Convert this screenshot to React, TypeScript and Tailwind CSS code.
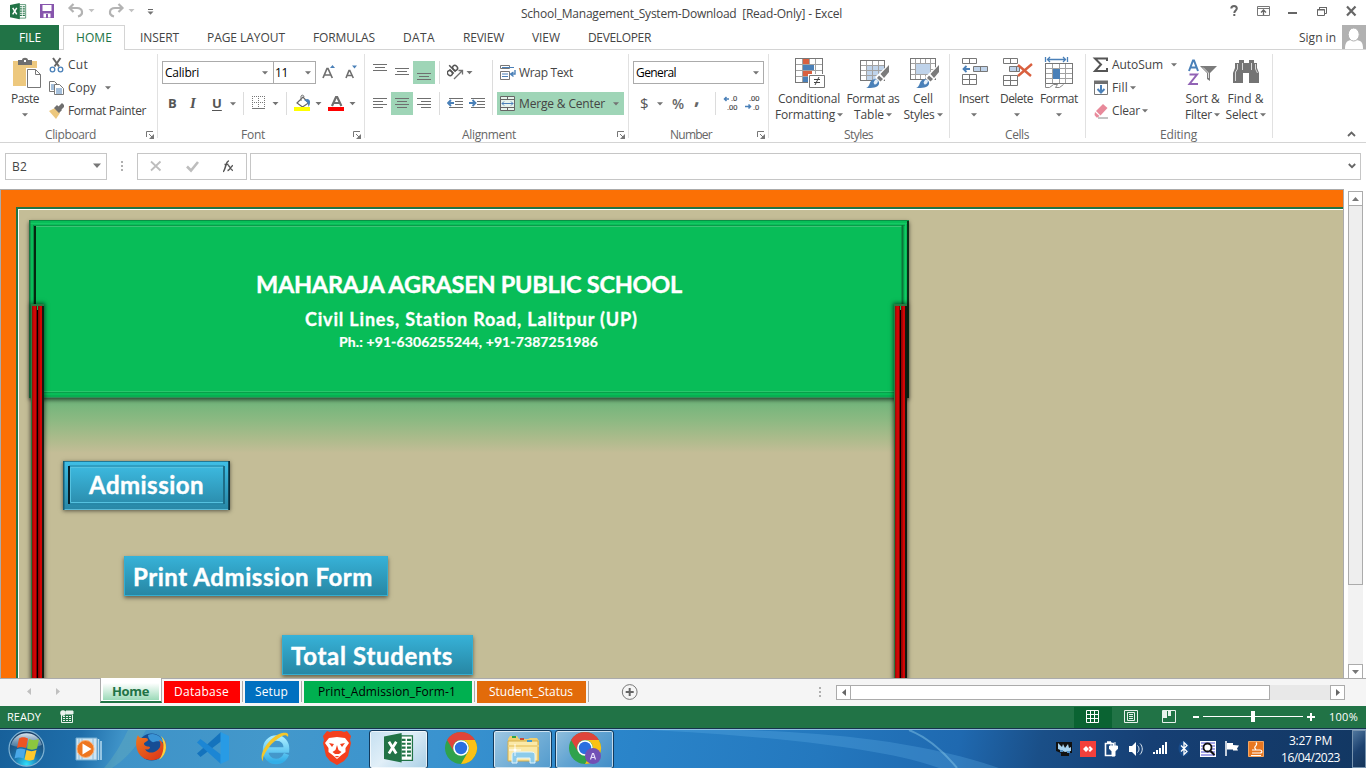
import { useLayoutEffect, useRef } from "react";
import type { ReactNode } from "react";

const GRAY = "#6f6f6f";
const BLUE = "#4a80b8";

/* Text set to the width given by its class, by letter spacing. */
function Fit({ className = "", children }: { className?: string; children: string }) {
  const outer = useRef<HTMLSpanElement>(null);
  const inner = useRef<HTMLSpanElement>(null);
  useLayoutEffect(() => {
    if (!outer.current || !inner.current) return;
    inner.current.style.letterSpacing = "0px";
    const room = outer.current.getBoundingClientRect().width;
    const own = inner.current.getBoundingClientRect().width;
    inner.current.style.letterSpacing = `${(room - own) / children.length}px`;
  }, [children]);
  return (
    <span ref={outer} className={`inline-block shrink-0 whitespace-pre ${className}`}>
      <span ref={inner} className="inline-block">{children}</span>
    </span>
  );
}

/* Icon whose drawing uses window coordinates: b = [x, y, width, height]. */
function Ico({ b, className = "", children }: { b: [number, number, number, number]; className?: string; children: ReactNode }) {
  return (
    <svg width={b[2]} height={b[3]} viewBox={b.join(" ")} className={`block shrink-0 ${className}`} fill="none">
      {children}
    </svg>
  );
}

const Arr = ({ x, y, c = "#737373" }: { x: number; y: number; c?: string }) => <path d={`M${x - 3} ${y - 1.5}h6l-3 3.2z`} fill={c} />;

function Drop({ className = "" }: { className?: string }) {
  return (
    <svg width="6" height="4" viewBox="0 0 6 4" className={`block shrink-0 ${className}`}>
      <path d="M0 .3h6L3 3.5z" fill="#737373" />
    </svg>
  );
}

function Group({ className, labelClass, label, launcher, children }: { className: string; labelClass: string; label: string; launcher?: boolean; children: ReactNode }) {
  return (
    <>
      <div className={`flex h-[92px] shrink-0 flex-col ${className}`}>
        <div className="h-[75px]">{children}</div>
        <div className="flex h-[17px] items-center text-[#666666]">
          <Fit className={`mt-[2px] ${labelClass}`}>{label}</Fit>
          {launcher && (
            <svg width="9" height="8" viewBox="0 0 9 8" className="mr-[2px] ml-auto mt-[2px]" fill="none" stroke="#777">
              <path d="M.5 6V.5H7M3 3l3.5 3.5" />
              <path d="M8 3v5H3z" fill="#777" stroke="none" />
            </svg>
          )}
        </div>
      </div>
      <div className="mt-1 h-[84px] w-px shrink-0 bg-[#e1e1e1]" />
    </>
  );
}

function Sep({ className }: { className: string }) {
  return <div className={`w-px shrink-0 bg-[#dcdcdc] ${className}`} />;
}

function Lines({ x, rows }: { x: number; rows: [number, number, number][] }) {
  return (
    <>
      {rows.map(([dx, y, w]) => (
        <rect key={y} x={x + dx} y={y} width={w} height="1" fill={GRAY} />
      ))}
    </>
  );
}

function Table({ x, y, w, h, nx, ny }: { x: number; y: number; w: number; h: number; nx: number; ny: number }) {
  const v = Array.from({ length: nx - 1 }, (_, i) => `M${x + Math.round(((i + 1) * w) / nx)} ${y}v${h}`).join("");
  const hz = Array.from({ length: ny - 1 }, (_, i) => `M${x} ${y + Math.round(((i + 1) * h) / ny)}h${w}`).join("");
  return (
    <>
      <path d={v + hz} stroke="#a2a2a2" />
      <rect x={x} y={y} width={w} height={h} stroke="#777" />
    </>
  );
}

function Brush({ x, y }: { x: number; y: number }) {
  return (
    <g transform={`translate(${x} ${y})`}>
      <path d="M22 0 9 12l6 7L23 9z" fill="#fff" />
      <path d="M23 0 14.500 9l3.500 4 5-6z" fill="#7b7b7b" />
      <path d="m13 10.500-2 2.500 3.500 3.500 2.500-2.500z" fill="#7b7b7b" />
      <path d="M0 23c4-1 3-6 6-8 4-2 8 1 7 4-1 4-7 4-13 4z" fill={BLUE} />
      <ellipse cx="9.800" cy="17" rx="1.800" ry="2.600" transform="rotate(35 9.800 17)" fill="#e6eff8" />
    </g>
  );
}

function Chrome({ x, y }: { x: number; y: number }) {
  return (
    <g transform={`translate(${x} ${y})`}>
      <circle r="16" fill="#2fa24c" />
      <path d="M-13.860-8A16 16 0 0 1 13.860-8L0-8A8 8 0 0 0-6.930 4z" fill="#e0443a" />
      <path d="M13.860-8A16 16 0 0 1 0 16L6.930 4A8 8 0 0 0 0-8z" fill="#fbc116" />
      <circle r="7.800" fill="#fff" />
      <circle r="6.200" fill="#2a6fe0" />
    </g>
  );
}

function ExcelMark({ x, y, s }: { x: number; y: number; s: number }) {
  return (
    <g transform={`translate(${x} ${y}) scale(${s})`}>
      <path d="M17 3h12v25H17z" fill="#fff" stroke="#217346" strokeWidth="1.300" />
      <path d="M18 7h4M18 11h4M18 15h4M18 19h4M18 23h4M23.500 7h4M23.500 11h4M23.500 15h4M23.500 19h4M23.500 23h4" stroke="#217346" strokeWidth="2.200" />
      <path d="M0 3.500 18 0v30L0 26.500z" fill="#217346" />
      <path d="m5 9 7.500 12M12.500 9 5 21" stroke="#fff" strokeWidth="2.800" />
    </g>
  );
}

function TitleBar() {
  return (
    <div className="flex h-[25px] shrink-0 items-center bg-white">
      <Ico b={[0, 0, 170, 25]}>
        <ExcelMark x={10} y={3} s={0.54} />
        <path d="M40 4h14v14H40z" fill="#8755ad" />
        <path d="M42.500 5h9v6h-9zM43.500 13.500h7v4h-7z" fill="#fff" />
        <path d="M46 14h2v4h-2z" fill="#8755ad" />
        <path d="m73.500 4-4 4 4 4M70 8h7c6 0 7 7 1 8.500" stroke="#b3b3b3" strokeWidth="2.200" />
        <Arr x={91.500} y={10.500} c="#c2c2c2" />
        <path d="m118.500 4 4 4-4 4M122 8h-7c-6 0-7 7-1 8.500" stroke="#b3b3b3" strokeWidth="2.200" />
        <Arr x={131.500} y={10.500} c="#c2c2c2" />
        <path d="M148 9.500h5" stroke="#666" />
        <Arr x={150.500} y={13} />
      </Ico>
      <Fit className="ml-[351px] mt-[2px] w-[321px]">School_Management_System-Download  [Read-Only] - Excel</Fit>
      <Ico b={[1220, 0, 146, 25]} className="ml-auto">
        <path d="M1231.300 8.500c0-3.500 5.500-3.500 5.500 0 0 2-2.500 2-2.500 4.500M1233.300 15h2" stroke="#666" strokeWidth="2" />
        <path d="M1257.500 6.500h12v9h-12zM1257.500 8.500h12" stroke="#777" />
        <path d="M1263.500 15v-4M1261 12.500l2.500-2.500 2.500 2.500" stroke="#666" strokeWidth="1.300" />
        <path d="M1288 13h9" stroke="#666" strokeWidth="2" />
        <path d="M1317.500 9.500h7v6h-7zM1317 10h8M1319.500 9V7.500h7v6H1325M1319 7.500h8" stroke="#666" />
        <path d="m1347 6.500 8.500 9M1355.500 6.500l-8.500 9" stroke="#666" strokeWidth="2.200" />
      </Ico>
    </div>
  );
}

function RibbonTabs() {
  return (
    <div className="flex h-[25px] shrink-0 border-b border-[#d4d4d4] bg-white leading-[26px]">
      <div className="h-[25px] w-[59px] bg-[#217346] pl-[19px] text-white">
        <Fit className="w-[22px]">FILE</Fit>
      </div>
      <div className="ml-1 h-[25px] w-[62px] border border-b-0 border-[#d4d4d4] bg-white pl-3 leading-[24px] text-[#217346]">
        <Fit className="w-[36px]">HOME</Fit>
      </div>
      <Fit className="ml-[15px] w-[39px]">INSERT</Fit>
      <Fit className="ml-[28px] w-[78px]">PAGE LAYOUT</Fit>
      <Fit className="ml-[28px] w-[62px]">FORMULAS</Fit>
      <Fit className="ml-[28px] w-[32px]">DATA</Fit>
      <Fit className="ml-[28px] w-[41px]">REVIEW</Fit>
      <Fit className="ml-[28px] w-[28px]">VIEW</Fit>
      <Fit className="ml-[28px] w-[63px]">DEVELOPER</Fit>
      <Fit className="ml-auto mr-[6px] w-[37px] leading-[25px]">Sign in</Fit>
      <Ico b={[1342, 25, 24, 24]}>
        <path d="M1342 25h24v24h-24z" fill="#b1b1b1" />
        <path d="M1345 49c0-7 2.500-8.500 6-9h5c5 .500 7 2 7 9z" fill="#fff" />
        <ellipse cx="1353.700" cy="34.500" rx="5.500" ry="6.500" fill="#fff" stroke="#b1b1b1" />
      </Ico>
    </div>
  );
}

function Clipboard() {
  return (
    <Group className="w-[157px]" labelClass="ml-[45px] w-[51px]" label="Clipboard" launcher>
      <div className="flex">
        <div className="flex w-[49px] flex-col items-center pt-[7px]">
          <Ico b={[12, 57, 30, 32]} className="ml-[5px]">
            <path d="M13 61h24v25H13z" fill="#edc87e" />
            <path d="M18 60h4c0-3 6-3 6 0h4v5H18z" fill="#6f6f6f" />
            <path d="M24 60h2v2h-2z" fill="#fff" />
            <path d="M26 68h11l5 5v16H26z" fill="#fff" />
            <path d="M27.500 69.500h8l5 5v13h-13z" fill="#fff" stroke="#777" />
            <path d="M35.500 69.500v5h5" stroke="#777" />
          </Ico>
          <Fit className="mt-[2px] ml-px w-[28px] leading-4">Paste</Fit>
          <Drop className="mt-[6px]" />
        </div>
        <div className="flex flex-col pt-[3px]">
          <div className="flex h-[23px] items-center gap-1">
            <Ico b={[49, 56, 15, 16]}>
              <path d="m53 57 6 8.500M60.500 57l-6 8.500" stroke="#666" strokeWidth="2" />
              <circle cx="52.500" cy="68.500" r="2.300" stroke={BLUE} strokeWidth="1.300" />
              <circle cx="60.500" cy="68.500" r="2.300" stroke={BLUE} strokeWidth="1.300" />
            </Ico>
            <Fit className="w-[20px]">Cut</Fit>
          </div>
          <div className="flex h-[23px] items-center gap-1">
            <Ico b={[49, 79, 15, 16]}>
              <path d="M49.500 80.500h5l3 3v7h-8z" fill="#fff" stroke="#777" />
              <path d="M51 84h3M51 86h3M51 88h3" stroke={BLUE} />
              <path d="M54.500 83.500h5l4 4v6h-9z" fill="#fff" stroke="#777" />
              <path d="M56 88h6M56 90h6M56 92h6" stroke={BLUE} />
            </Ico>
            <Fit className="w-[28px]">Copy</Fit>
            <Drop className="ml-[5px]" />
          </div>
          <div className="flex h-[23px] items-center gap-1">
            <Ico b={[49, 102, 15, 16]}>
              <path d="m49 110 6-3 5 5-4 6z" fill="#edc87e" />
              <path d="m54 107 3-3 5 5-3 3zM58 106l4-4 3 3-4 4z" fill="#6f6f6f" />
            </Ico>
            <Fit className="w-[78px]">Format Painter</Fit>
          </div>
        </div>
      </div>
    </Group>
  );
}

function FontGroup() {
  return (
    <Group className="w-[206px]" labelClass="ml-[83px] w-[24px]" label="Font" launcher>
      <div className="flex h-[34px] pt-[11px] pl-1">
        <div className="flex h-[23px] w-[111px] items-center justify-between border border-r-0 border-[#ababab] pr-[5px] pl-[2px] text-black">
          <Fit className="mt-px w-[34px]">Calibri</Fit>
          <Drop />
        </div>
        <div className="flex h-[23px] w-[43px] items-center justify-between border border-[#ababab] pr-[4px] pl-px text-black">
          <Fit className="mt-px w-[13px]">11</Fit>
          <Drop />
        </div>
        <Ico b={[322, 61, 42, 23]} className="ml-[6px]">
          <path d="m323 78 4-9.500h1l4.300 9.500M324.500 75h6" stroke={GRAY} strokeWidth="1.700" />
          <path d="M330 68h5l-2.500-3z" fill={BLUE} />
          <path d="m346 78 3-7.500h.800l3.500 7.500M347.200 75.500h5" stroke={GRAY} strokeWidth="1.600" />
          <path d="M352 65.500h5l-2.500 3z" fill={BLUE} />
        </Ico>
      </div>
      <div className="mt-2 flex h-[23px] items-center text-[13px] text-[#555]">
        <span className="-mt-[2px] ml-[10px] w-[22px] font-bold">B</span>
        <span className="-mt-[2px] w-[22px] font-['Liberation_Serif'] text-[15px] font-bold italic">I</span>
        <span className="-mt-[2px] w-[18px] font-bold underline underline-offset-2">U</span>
        <Drop />
        <Sep className="ml-[7px] h-[23px]" />
        <Ico b={[252, 92, 30, 23]} className="ml-[7px]">
          <path d="M253 96.500h13M253 102.500h13M253.500 96v12M259.500 96v12M265.500 96v12" stroke="#777" strokeDasharray="1 1" />
          <path d="M253 108.500h13" stroke="#777" />
          <Arr x={276.500} y={103.500} />
        </Ico>
        <Sep className="ml-[5px] h-[23px]" />
        <Ico b={[295, 92, 69, 23]} className="ml-[7px]">
          <path d="m298 103 6-6 5.500 6-6 4z" stroke="#666" fill="#fff" strokeWidth="1.200" />
          <path d="M302 101v-5c1-1.500 3-1 3 1" stroke="#777" />
          <path d="m305 100 3-1c3.500 0 4 4 1.500 8-.300-4-1-5-4.500-7z" fill={BLUE} />
          <path d="M295 107h16v4h-16z" fill="#ffff00" />
          <Arr x={319.500} y={103.500} />
          <path d="m333 106 4-9h1.200l4.200 9M334.500 103h6.500" stroke={GRAY} strokeWidth="2.200" />
          <path d="M329 107h16v4h-16z" fill="#ff0000" />
          <Arr x={353.500} y={103.500} />
        </Ico>
      </div>
    </Group>
  );
}

function Alignment() {
  return (
    <Group className="w-[263px]" labelClass="ml-[97px] w-[54px]" label="Alignment" launcher>
      <div className="flex pt-[10px]">
        <div>
          <div className="flex h-[24px] items-end">
            <Ico b={[369, 61, 22, 23]} className="ml-1">
              <Lines x={373} rows={[[0, 64, 14], [2, 67, 10], [0, 70, 14]]} />
            </Ico>
            <Ico b={[391, 61, 22, 23]}>
              <Lines x={395} rows={[[0, 68, 14], [2, 71, 10], [0, 74, 14]]} />
            </Ico>
            <Ico b={[413, 61, 22, 23]} className="bg-[#9fd5b7]">
              <Lines x={417} rows={[[0, 73, 14], [2, 76, 10], [0, 79, 14]]} />
            </Ico>
            <Sep className="ml-1 h-[23px]" />
            <Ico b={[447, 61, 32, 23]} className="ml-[7px]">
              <g transform="rotate(-45 452 71)" stroke="#555" strokeWidth="1.500">
                <ellipse cx="449" cy="71" rx="2.200" ry="2.700" />
                <path d="M451.500 68v6M454 65v9" />
                <ellipse cx="456.400" cy="71" rx="2.200" ry="2.700" />
              </g>
              <path d="m454 79 8-8M458.500 70.500h4v4" stroke={GRAY} strokeWidth="1.300" />
              <Arr x={469.500} y={72.500} />
            </Ico>
          </div>
          <div className="mt-2 flex h-[23px] items-end">
            <Ico b={[369, 92, 22, 23]} className="ml-1">
              <Lines x={373} rows={[[0, 98, 14], [0, 101, 10], [0, 104, 14], [0, 107, 10]]} />
            </Ico>
            <Ico b={[391, 92, 22, 23]} className="bg-[#9fd5b7]">
              <Lines x={395} rows={[[0, 98, 14], [2, 101, 10], [0, 104, 14], [2, 107, 10]]} />
            </Ico>
            <Ico b={[413, 92, 22, 23]}>
              <Lines x={417} rows={[[0, 98, 14], [4, 101, 10], [0, 104, 14], [4, 107, 10]]} />
            </Ico>
            <Sep className="ml-1 h-[23px]" />
            <Ico b={[447, 92, 40, 23]} className="ml-[7px]">
              <Lines x={447} rows={[[2, 98, 14], [8, 101, 8], [8, 104, 8], [2, 107, 14]]} />
              <path d="M449 103h5M451 100l-3 3 3 3" stroke={BLUE} strokeWidth="1.800" />
              <Lines x={469} rows={[[2, 98, 14], [8, 101, 8], [8, 104, 8], [2, 107, 14]]} />
              <path d="M469 103h5M472.500 100l3 3-3 3" stroke={BLUE} strokeWidth="1.800" />
            </Ico>
          </div>
        </div>
        <Sep className="ml-[5px] h-[55px]" />
        <div className="ml-1 pt-px">
          <div className="flex h-[23px] items-center pl-[3px]">
            <Ico b={[500, 64, 16, 16]}>
              <path d="M500.500 64.500h9v3h-9zM500.500 70.500h9v8h-9z" stroke="#777" />
              <path d="M502 66.500h12M502 73h6M502 75.500h6" stroke={BLUE} strokeWidth="1.200" />
              <path d="M515 69v4h-4M513.500 71l-3 2 3 2.500" stroke={BLUE} strokeWidth="1.400" />
            </Ico>
            <Fit className="mt-px ml-[3px] w-[54px]">Wrap Text</Fit>
          </div>
          <div className="mt-2 flex h-[23px] w-[127px] items-center bg-[#9fd5b7] pl-[3px]">
            <Ico b={[500, 95, 16, 16]}>
              <path d="M500.500 95.500h14v14h-14zM500.500 98.500h14M500.500 106.500h14M507.500 95v3M507.500 107v3" stroke="#666" fill="#e7f4ed" />
              <path d="M502 102.500h11M504 100.500l-2 2 2 2M511 100.500l2 2-2 2" stroke={BLUE} />
            </Ico>
            <Fit className="mt-px ml-[3px] w-[86px]">Merge &amp; Center</Fit>
            <Drop className="ml-[8px]" />
          </div>
        </div>
      </div>
    </Group>
  );
}

function NumberGroup() {
  return (
    <Group className="w-[139px]" labelClass="ml-[41px] w-[42px]" label="Number" launcher>
      <div className="flex h-[34px] pt-[11px] pl-1">
        <div className="flex h-[23px] w-[131px] items-center justify-between border border-[#ababab] pr-[4px] pl-[2px] text-black">
          <Fit className="mt-px w-[40px]">General</Fit>
          <Drop />
        </div>
      </div>
      <div className="mt-2 flex h-[23px] items-center">
        <span className="-mt-px ml-[11px] w-[17px] text-[15px] leading-[23px] text-[#555]">$</span>
        <Drop className="mt-px" />
        <span className="ml-[9px] w-[22px] text-[14px] font-semibold text-[#666]">%</span>
        <span className="-mt-[14px] w-[21px] text-[20px] font-bold leading-[23px] text-[#666]">,</span>
        <Sep className="h-[23px]" />
        <Ico b={[721, 92, 42, 23]} className="ml-[5px]">
          <g fill="#444" fontSize="7.500" fontFamily="Liberation Sans" stroke="#444" strokeWidth=".15">
            <text x="731" y="101">.0</text>
            <text x="727" y="109.700">.00</text>
            <text x="749" y="101">.00</text>
            <text x="753" y="109.700">.0</text>
          </g>
          <path d="M724 99h5M726.500 97l-2 2 2 2M745 106.500h5M748.500 104.500l2 2-2 2" stroke={BLUE} strokeWidth="1.500" />
        </Ico>
      </div>
    </Group>
  );
}

function Big({ className, icon, a, aw, b, bw }: { className: string; icon: ReactNode; a: string; aw: string; b?: string; bw?: string }) {
  return (
    <div className={`flex shrink-0 flex-col items-center pt-[6px] leading-4 ${className}`}>
      {icon}
      <Fit className={`mt-[3px] ${aw}`}>{a}</Fit>
      <div className="flex h-4 items-center gap-[2px]">
        {b && <Fit className={bw}>{b}</Fit>}
        <Drop className="-mt-px" />
      </div>
    </div>
  );
}

function Styles() {
  return (
    <Group className="w-[180px]" labelClass="ml-[75px] w-[29px]" label="Styles">
      <div className="flex">
        <Big className="ml-1 w-[72px]" a="Conditional" aw="w-[62px]" b="Formatting" bw="w-[60px]" icon={
          <Ico b={[793, 56, 32, 32]}>
            <Table x={795.500} y={58.500} w={27} h={24} nx={4} ny={4} />
            <path d="M803 59h6v5h-6zM803 71h9v5h-9z" fill="#d9603f" />
            <path d="M803 65h11v5h-11zM803 77h5v5h-5z" fill={BLUE} />
            <path d="M808 74h18v15h-18z" fill="#fff" />
            <path d="M809.500 75.500h15v12h-15z" fill="#fff" stroke="#777" />
            <path d="M814 79.500h6M814 82.500h6M819 77l-4 8" stroke="#444" />
          </Ico>
        } />
        <Big className="w-[56px]" a="Format as" aw="w-[53px]" b="Table" bw="w-[30px]" icon={
          <Ico b={[857, 56, 32, 32]}>
            <path d="M867 66h17v14h-17z" fill="#bfd3ea" />
            <Table x={860.500} y={60.500} w={24} h={20} nx={4} ny={4} />
            <Brush x={866} y={65} />
          </Ico>
        } />
        <Big className="w-[44px]" a="Cell" aw="w-[20px]" b="Styles" bw="w-[31px]" icon={
          <Ico b={[907, 56, 32, 32]}>
            <Table x={910.500} y={58.500} w={25} h={21} nx={5} ny={4} />
            <path d="M916 64h14v10h-14z" fill="#bfd3ea" />
            <Brush x={916} y={65} />
          </Ico>
        } />
      </div>
    </Group>
  );
}

function Cells() {
  return (
    <Group className="w-[135px]" labelClass="ml-[55px] w-[24px]" label="Cells">
      <div className="flex">
        <Big className="ml-[4px] w-[40px]" a="Insert" aw="w-[30px]" icon={
          <Ico b={[959, 56, 30, 32]}>
            <path d="M962.500 58.500h14v5h-14zM969.500 58v6M962.500 74.500h14v10h-14zM969.500 74v11M962 79.500h15" stroke="#777" />
            <path d="M973.500 66.500h14v5h-14zM980.500 66v6" fill="#bfd3ea" stroke="#777" />
            <path d="M964 69h6M966.500 66l-3 3 3 3" stroke={BLUE} strokeWidth="1.800" />
          </Ico>
        } />
        <Big className="w-[45px]" a="Delete" aw="w-[33px]" icon={
          <Ico b={[1001, 56, 32, 32]}>
            <path d="M1003.500 58.500h14v5h-14zM1010.500 58v6M1003.500 75.500h14v10h-14zM1010.500 75v11M1003 80.500h15" stroke="#777" />
            <path d="M1009.500 66.500h10v5h-10zM1016.500 66v6" fill="#bfd3ea" stroke="#777" />
            <path d="m1018 65 13 11M1032 64l-14 12" stroke="#d9603f" strokeWidth="2.400" />
          </Ico>
        } />
        <Big className="w-[40px]" a="Format" aw="w-[38px]" icon={
          <Ico b={[1043, 56, 32, 32]}>
            <path d="M1045.500 57v5M1067.500 57v5M1047 59.500h19M1050 57l-2.500 2.500 2.500 2.500M1063 57l2.500 2.500-2.500 2.500" stroke={BLUE} strokeWidth="1.300" />
            <Table x={1045.500} y={63.500} w={27} h={20} nx={4} ny={4} />
            <path d="M1053 69h7v10h-7z" fill={BLUE} />
            <path d="M1045.500 83v4.500h4l4-3h4l-2 3h4l4-3" stroke="#888" />
          </Ico>
        } />
      </div>
    </Group>
  );
}

function Editing() {
  return (
    <Group className="w-[186px]" labelClass="ml-[74px] w-[37px]" label="Editing">
      <div className="flex">
        <div className="w-[95px] pt-[3px] pl-[6px]">
          <div className="flex h-[23px] items-center">
            <Ico b={[1092, 56, 17, 16]}>
              <path d="M1107 60v-2.500h-12l6 6-6 6.500h12V67" stroke="#555" strokeWidth="2" />
            </Ico>
            <Fit className="ml-[3px] w-[51px]">AutoSum</Fit>
            <Drop className="ml-[8px]" />
          </div>
          <div className="flex h-[23px] items-center">
            <Ico b={[1092, 79, 17, 16]}>
              <path d="M1094.500 80.500h13v13h-13z" stroke="#777" />
              <path d="M1094 79.500h14v3.500h-14z" fill="#6f6f6f" />
              <path d="M1101 84v7M1097.500 88l3.500 3.500 3.500-3.500" stroke={BLUE} strokeWidth="2" />
            </Ico>
            <Fit className="ml-[3px] w-[16px]">Fill</Fit>
            <Drop className="ml-[2px]" />
          </div>
          <div className="flex h-[23px] items-center">
            <Ico b={[1092, 102, 17, 16]}>
              <path d="m1096 110 7-7 4.500 4-7 7.500z" fill="#e8899a" />
              <path d="m1095 111 4.500 4-2 1.500h-1l-2-2.500z" fill="#e8899a" />
              <path d="M1098 117h10" stroke="#888" />
            </Ico>
            <Fit className="ml-[3px] w-[28px]">Clear</Fit>
            <Drop className="ml-[2px]" />
          </div>
        </div>
        <Big className="w-[43px]" a="Sort &" aw="w-[34px]" b="Filter" bw="w-[27px]" icon={
          <Ico b={[1187, 56, 32, 32]} className="ml-[1px]">
            <path d="m1189 71 4-10.500h1l4 10.500M1190.500 67.500h6.500" stroke={BLUE} strokeWidth="2" />
            <path d="M1189.500 74.500h7.500l-7.500 9.500h8.500" stroke="#9163b5" strokeWidth="2" />
            <path d="M1200 66h17l-7 7v8l-3-2v-6z" fill="#7b7b7b" />
            <path d="M1203 67.500 1208.500 73v5" stroke="#ddd" />
          </Ico>
        } />
        <Big className="w-[43px]" a="Find &" aw="w-[36px]" b="Select" bw="w-[32px]" icon={
          <Ico b={[1230, 56, 32, 32]}>
            <path d="M1239 60h5v3h2v5h-11v-5h4zM1249 60h5v3h3v5h-11v-5h3zM1235 68h22l2 5v10h-10v-10h-6v10h-10V73z" fill="#747474" />
            <path d="M1237.500 64v5l-2 3v9M1242.500 63v7M1251.500 63v7M1255.500 64v5l2 4" stroke="#d8d8d8" />
          </Ico>
        } />
      </div>
    </Group>
  );
}

function FormulaBar() {
  return (
    <div className="flex h-[46px] shrink-0 items-start bg-white pt-[10px]">
      <div className="ml-[5px] flex h-[27px] w-[102px] items-center justify-between border border-[#c6c6c6] pr-[5px] pl-[6px]">
        <Fit className="mt-px w-[15px]">B2</Fit>
        <svg width="8" height="5" viewBox="0 0 8 5" className="-mt-[3px]"><path d="M0 .5h8L4 5z" fill="#777" /></svg>
      </div>
      <Ico b={[107, 153, 30, 27]}>
        <path d="M121 161h2v2h-2zM121 165h2v2h-2zM121 169h2v2h-2z" fill="#b0b0b0" />
      </Ico>
      <div className="h-[27px] w-[110px] border border-[#c6c6c6]">
        <Ico b={[138, 154, 108, 25]}>
          <path d="m151 161.500 9.500 9M160.500 161.500l-9.500 9" stroke="#bdbdbd" strokeWidth="1.800" />
          <path d="m187 166.500 4 4 7-8.500" stroke="#bdbdbd" strokeWidth="2.600" />
          <path d="M223 171.500c2.500 0 2.500-11 6-10.500M224.500 164.500h4" stroke="#555" strokeWidth="1.500" />
          <path d="M228 165.500c2.500 0 2 5 5 5M233 165.500c-2 0-3 5-5.500 5" stroke="#555" strokeWidth="1.300" />
        </Ico>
      </div>
      <div className="ml-[3px] flex h-[27px] w-[1111px] items-center justify-end border border-[#c6c6c6]">
        <svg width="8" height="6" viewBox="0 0 8 6" className="mr-1 mb-[2px]" fill="none"><path d="m.8 1 3.200 3.200L7.200 1" stroke="#666" strokeWidth="1.800" /></svg>
      </div>
    </div>
  );
}

/* Shapes on the worksheet; their places are free canvas positions. */
function Pole({ className }: { className: string }) {
  return (
    <div className={`absolute top-[114px] flex h-[380px] w-[13px] border-t-2 border-l border-[#2d7a42] shadow-[0_0_4px_1px_rgba(0,0,0,0.55)] ${className}`}>
      <div className="w-[4px] bg-[linear-gradient(90deg,#8d0d06,#d20505_50%)]" />
      <div className="w-px bg-[#7c0303]" />
      <div className="mt-1 w-px bg-black" />
      <div className="w-[2px] bg-[linear-gradient(90deg,#8a0303,#b80404)]" />
      <div className="w-[2px] bg-[#d20505]" />
      <div className="w-[2px] bg-[#141b12]" />
    </div>
  );
}

function Sheet() {
  return (
    <div className="relative h-[488px] w-[1344px] shrink-0 overflow-hidden border-r border-l border-[#ababab] bg-[#fb7005] pt-[17px] pl-[15px] font-[Lato,'Liberation_Sans',sans-serif] font-bold text-white">
      <div className="h-[480px] w-[1340px] border-2 border-[#217346] bg-white pt-px pl-px">
        <div className="h-full w-full bg-[#c4bd97]" />
      </div>
      <div className="absolute top-[208px] left-[40px] h-[55px] w-[855px] bg-[linear-gradient(180deg,#6db47a,#8cb982_40%,#adbb8c_75%,#c4bd97)]" />
      <div className="absolute top-[30px] left-[28px] h-[178px] w-[880px] bg-[#08bd58] shadow-[0_2px_4px_rgba(0,0,0,0.6)]">
        <svg width="880" height="178" className="block" fill="none">
          <path d="M0 .5h880" stroke="#0a8f45" />
          <path d="M1 3.500h877" stroke="#15c964" />
          <path d="M4 5.500h872" stroke="#0a9c4a" />
          <path d="M6 6.500h868" stroke="#3cc375" />
          <path d="M4 172.500h872M1 176h878" stroke="#08a04b" />
          <path d="M4 171.500h872" stroke="#2ac66c" />
          <path d="M0 177.500h880" stroke="#2f8d57" />
          <path d="M.5 0v178" stroke="#1c7443" strokeWidth="2" />
          <path d="M4.500 5v167" stroke="#0b8a43" />
          <path d="M6 6v166" stroke="#04270f" strokeWidth="2" />
          <path d="M873.500 5v167" stroke="#0b7539" strokeWidth="2" />
          <path d="M876.500 3v172" stroke="#15c964" />
          <path d="M879 1v177" stroke="#0b3018" strokeWidth="2" />
        </svg>
      </div>
      <Pole className="left-[30px]" />
      <Pole className="left-[893px]" />
      <Fit className="absolute top-[79px] left-[255px] w-[426px] text-[23.5px] leading-[30px] [-webkit-text-stroke:0.4px_white]">MAHARAJA AGRASEN PUBLIC SCHOOL</Fit>
      <Fit className="absolute top-[117px] left-[304px] w-[333px] text-[18px] leading-6 [-webkit-text-stroke:0.3px_white]">Civil Lines, Station Road, Lalitpur (UP)</Fit>
      <Fit className="absolute top-[142px] left-[338px] w-[259px] text-[14px] leading-5 [-webkit-text-stroke:0.2px_white]">Ph.: +91-6306255244, +91-7387251986</Fit>
      <div className="absolute top-[271px] left-[62px] h-[49px] w-[167px] bg-[linear-gradient(180deg,#3fbfe6,#2886a5)] shadow-[0_1px_4px_rgba(0,0,0,0.55)]">
        <svg width="167" height="49" className="absolute inset-0" fill="none">
          <path d="M1 .5h165" stroke="#237894" /><path d="M1 48.500h166" stroke="#5bb9d5" />
          <path d="M.5 0v49" stroke="#175c74" strokeWidth="2" />
          <path d="M166.500 0v49" stroke="#092d3c" strokeWidth="2.500" />
          <path d="M6 5h155v38H6z" stroke="#2483a2" />
          <path d="M7.500 6.500h153v35h-153z" stroke="#55c1df" />
          <path d="M6 5v38" stroke="#05202b" strokeWidth="2" />
          <path d="M161 5v38" stroke="#1d6d88" strokeWidth="2" />
        </svg>
        <Fit className="absolute top-[9px] left-[26px] w-[115px] text-[24px] leading-[30px] [-webkit-text-stroke:0.4px_white]">Admission</Fit>
      </div>
      <div className="absolute top-[366px] left-[123px] h-[40px] w-[264px] border border-t-0 border-[#35aed0] bg-[linear-gradient(180deg,#37b2d8,#2787a4)] pt-[6px] pl-[8px] shadow-[0_2px_4px_rgba(0,0,0,0.5)]">
        <Fit className="w-[240px] text-[24px] leading-[30px] [-webkit-text-stroke:0.4px_white]">Print Admission Form</Fit>
      </div>
      <div className="absolute top-[445px] left-[281px] h-[40px] w-[191px] border border-t-0 border-[#35aed0] bg-[linear-gradient(180deg,#37b2d8,#2787a4)] pt-[6px] pl-[8px] shadow-[0_2px_4px_rgba(0,0,0,0.5)]">
        <Fit className="w-[162px] text-[24px] leading-[30px] [-webkit-text-stroke:0.4px_white]">Total Students</Fit>
      </div>
    </div>
  );
}

function VScroll() {
  return (
    <div className="flex w-[22px] shrink-0 flex-col bg-white pt-[2px] pl-1">
      <div className="flex h-[15px] w-[15px] shrink-0 items-center justify-center border border-[#ababab] bg-white">
        <svg width="7" height="4" viewBox="0 0 7 4"><path d="M3.500 0 7 4H0z" fill="#777" /></svg>
      </div>
      <div className="h-[379px] w-[15px] shrink-0 border border-t-0 border-[#ababab] bg-[#eeeeee]" />
      <div className="h-[79px] w-[15px] shrink-0 bg-[#f2f2f2]" />
      <div className="z-10 flex h-[15px] w-[15px] shrink-0 items-center justify-center border border-[#ababab] bg-white">
        <svg width="7" height="4" viewBox="0 0 7 4"><path d="M3.500 4 7 0H0z" fill="#777" /></svg>
      </div>
    </div>
  );
}

function SheetTabs() {
  const sep = <div className="ml-[2px] h-[21px] w-px bg-[#ababab]" />;
  return (
    <div className="flex h-[28px] shrink-0 items-start border-t border-[#ababab] bg-[#f5f5f5] pt-[2px] leading-[21px]">
      <Ico b={[0, 681, 100, 22]}>
        <path d="M31 688v7l-4-3.500zM56 688v7l4-3.500z" fill="#c0c0c0" />
      </Ico>
      <div className="-mt-[3px] h-[25px] w-[62px] border-x border-b-2 border-x-[#ababab] border-b-[#217346] bg-white px-[2px] pt-[5px] pb-[1px]">
        <div className="h-[17px] bg-[linear-gradient(180deg,#ffffff,#9bdab8)] pl-[9px] leading-[17px] font-bold text-[#217346]">
          <Fit className="w-[37px] text-[13px]">Home</Fit>
        </div>
      </div>
      <div className="ml-[2px] h-[22px] w-[76px] bg-[#ff0000] pl-[10px] text-white"><Fit className="w-[55px]">Database</Fit></div>
      {sep}
      <div className="ml-[2px] h-[22px] w-[54px] bg-[#0070c0] pl-[10px] text-white"><Fit className="w-[33px]">Setup</Fit></div>
      {sep}
      <div className="ml-[2px] h-[22px] w-[168px] bg-[#00b050] pl-[14px] text-black"><Fit className="w-[138px]">Print_Admission_Form-1</Fit></div>
      {sep}
      <div className="ml-[2px] h-[22px] w-[109px] bg-[#e26b0a] pl-[12px] text-white"><Fit className="w-[84px]">Student_Status</Fit></div>
      {sep}
      <Ico b={[589, 681, 247, 22]}>
        <circle cx="629.700" cy="692" r="7.400" stroke="#777" />
        <path d="M625.700 692h8M629.700 688v8" stroke="#666" strokeWidth="2" />
        <path d="M819 687h2v2h-2zM819 691h2v2h-2zM819 695h2v2h-2z" fill="#b0b0b0" />
      </Ico>
      <div className="mt-[4px] flex h-[15px] w-[509px] bg-[#e8e8e8]">
        <div className="flex w-[15px] items-center justify-center border border-[#ababab] bg-white">
          <svg width="4" height="7" viewBox="0 0 4 7"><path d="M4 0v7L0 3.500z" fill="#666" /></svg>
        </div>
        <div className="w-[419px] border border-l-0 border-[#ababab] bg-white" />
        <div className="ml-auto flex w-[15px] items-center justify-center border border-[#ababab] bg-white">
          <svg width="4" height="7" viewBox="0 0 4 7"><path d="M0 0v7l4-3.500z" fill="#666" /></svg>
        </div>
      </div>
    </div>
  );
}

function StatusBar() {
  return (
    <div className="flex h-[22px] shrink-0 items-center bg-[#217346] text-[11px] text-white">
      <Fit className="ml-[7px] w-[34px]">READY</Fit>
      <Ico b={[60, 706, 20, 22]} className="ml-[19px]">
        <path d="M66 711h7v3h-7zM61.500 715v7.500h11V715" stroke="#e8f2ec" />
        <path d="M66 711h7v3h-7z" fill="#e8f2ec" />
        <circle cx="63" cy="713" r="2.800" fill="#e8f2ec" />
        <path d="M63 716.500h2M66 716.500h2M69 716.500h2M63 718.500h2M66 718.500h2M69 718.500h2M63 720.500h2M66 720.500h2M69 720.500h2" stroke="#e8f2ec" />
      </Ico>
      <Ico b={[1074, 706, 250, 22]} className="ml-auto">
        <path d="M1074 707h38v21h-38z" fill="#0a6332" />
        <path d="M1086.500 710.500h12v12h-12zM1086 714.500h13M1086 718.500h13M1090.500 710v13M1094.500 710v13" stroke="#fff" />
        <path d="M1124.500 710.500h13v12h-13zM1127.500 712.500h7v8h-7zM1129 714.500h4M1129 716.500h4M1129 718.500h4" stroke="#e8f2ec" />
        <path d="M1162.500 710.500h13v12h-13z" stroke="#e8f2ec" />
        <path d="M1163 711h4v7h-4zM1168 711h3v5h-3z" fill="#e8f2ec" />
        <path d="M1193 717h6M1307 717h8M1311 713v8" stroke="#fff" strokeWidth="2" />
        <path d="M1203 716.500h100" stroke="#fff" />
        <path d="M1251 711h4v11h-4z" fill="#fff" />
      </Ico>
      <Fit className="mr-[8px] ml-[5px] w-[29px]">100%</Fit>
    </div>
  );
}

function TaskButton({ className, children }: { className: string; children: ReactNode }) {
  return <div className={`h-[39px] w-[59px] shrink-0 rounded-[3px] border border-[#123a5c] shadow-[inset_0_0_0_1px_rgba(255,255,255,0.65)] ${className}`}>{children}</div>;
}

function Taskbar() {
  return (
    <div className="flex h-[40px] shrink-0 items-start border-t border-[#16344c] bg-[linear-gradient(102deg,#17609a_0%,#1f6eaa_6%,#3f93c8_9%,#4398cb_20%,#3a93cf_32%,#2b86cb_44%,#2478be_60%,#1f69b0_70%,#1a4f88_76%,#163f74_84%,#123762_100%)] pt-px shadow-[inset_0_1px_0_rgba(190,220,240,0.7)]">
      <Ico b={[0, 730, 370, 38]}>
        <defs>
          <radialGradient id="orb" cx=".5" cy=".95" r=".9">
            <stop offset="0" stopColor="#2fe0fb" /><stop offset=".4" stopColor="#1c74ad" /><stop offset="1" stopColor="#1b3f66" />
          </radialGradient>
          <linearGradient id="gloss" x1="0" y1="0" x2="0" y2="1">
            <stop offset="0" stopColor="#e3eff7" stopOpacity=".95" /><stop offset="1" stopColor="#8fb0c8" stopOpacity=".35" />
          </linearGradient>
          <linearGradient id="ie" x1="0" y1="0" x2="0" y2="1">
            <stop offset="0" stopColor="#a5ebff" /><stop offset="1" stopColor="#32aee8" />
          </linearGradient>
          <linearGradient id="fox" x1="0" y1="0" x2="1" y2="1">
            <stop offset="0" stopColor="#f0781e" /><stop offset="1" stopColor="#d8301a" />
          </linearGradient>
        </defs>
        <path d="M104 768c12-14 18-26 24-38h18c-8 14-18 28-34 38z" fill="#7ec1b5" opacity=".25" />
        <circle cx="26.500" cy="748.700" r="17.500" fill="url(#orb)" stroke="#80b4d4" strokeWidth="1.200" />
        <path d="M11 745a16 15.500 0 0 1 31 0c-10 3.500-21 3.500-31 0z" fill="url(#gloss)" />
        <path d="M19 738.500c3-2 5.500-1.500 9 0l-2 9.500c-3.500-1.500-6-1.500-9 0z" fill="#ee5423" />
        <path d="M29 739c3 1.500 6 1.500 10 0l-2 9.500c-3.500 1.500-6.500 1.500-10 0z" fill="#8cc63f" />
        <path d="M16.500 749.500c3-1.500 5.500-1 9 0l-2 9c-3.500-1.500-6-1.500-9 0z" fill="#4aa9e8" />
        <path d="M26.500 750c3.500 1.500 6.500 1.500 10 0l-2.500 9.500c-3.500 1.500-6 1.500-9.500 0z" fill="#fec92d" />
        <path d="M76 738h21v22H76z" fill="#cfe5f3" stroke="#72acd0" />
        <path d="M79 738v22M82 738v22M93 738v22" stroke="#8dbedb" />
        <path d="M98.500 739v21M101 741v19" stroke="#b8dbef" strokeWidth="1.500" />
        <circle cx="85.500" cy="749" r="8.500" fill="#ee761f" stroke="#f8b27b" />
        <path d="M82.500 743.500v11l9-5.500z" fill="#fff" />
        <circle cx="151.500" cy="747" r="13.500" fill="#164d94" />
        <path d="M148 735c6-3 14 1 16 8-3-2-8-2-10-1s-6-3-6-7z" fill="#3a94d5" />
        <path d="M138 735c1 3 3 3 6 3 2 0 4 0 4 2-1 2-4 2-4 4 1 3 4 2 6 3 0 3-4 3-5 2 3 6 12 4 15-2 1-3 0-5-1-7 3 1 5 4 5 8 2-2 2-7 0-11 4 7 2 16-3 20-8 6-19 3-23-5-3-7-2-13 0-17z" fill="url(#fox)" />
        <path d="M161 736c7 6 7 18-2 24 5-7 6-16 2-24z" fill="#fbd03c" />
        <path d="m221 732-24 21.500 3.500 3.500 21-16z" fill="#1473bd" />
        <path d="m221 764-24-21.500 3.500-3.500 21 16z" fill="#1c86d4" />
        <path d="m220.500 732 8.500 4v24l-8.500 4z" fill="#289be5" />
        <path d="M286.500 754c-2 5-6 7.500-10.500 7.500-6 0-10.500-4.500-10.500-11.500s4.500-12 11-12 10.500 5 10 12h-19" stroke="url(#ie)" strokeWidth="5.500" />
        <path d="M264 762c-8-6 6-26 18-29 6-1 7 1 6 4-2-3-5-2-9 1-10 6-19 21-15 24z" fill="#f4c72b" />
        <path d="m330 732 3-1h8l3 1 3-1 4 5-1 4 1 3-3 13-4 5-7 4-7-4-4-5-3-13 1-3-1-4 4-5z" fill="#f4401e" />
        <path d="m329 738 8-1 8 1 4 5-3.500 5v4l-4 3-4.500 4-4.500-4-4-3v-4l-3.500-5z" fill="#fff" />
        <path d="m329 743 5 1-2 3zM345 743l-5 1 2 3zM337 745l-1.500 5-3 2 2.500 2h4l2.500-2-3-2zM334.500 756h5l-2.500 1.500z" fill="#f4401e" />
      </Ico>
      <TaskButton className="-ml-px bg-[linear-gradient(135deg,#c5e0f1,#e1eff8_45%,#a9cfe6)]">
        <Ico b={[370, 731, 57, 37]}><ExcelMark x={384} y={733} s={0.98} /></Ico>
      </TaskButton>
      <Ico b={[428, 730, 66, 38]}><Chrome x={461} y={748} /></Ico>
      <TaskButton className="-ml-px bg-[linear-gradient(135deg,#a0c8e2,#79b2d8_45%,#539bcd)]">
        <Ico b={[494, 731, 57, 37]}>
          <path d="M508 739l2-3h7l2 3h9l2-1h7l2 3v20h-29z" fill="#efcf70" />
          <path d="M508 741h30v20h-30z" fill="#fbe9a8" stroke="#d4ad48" />
          <path d="M512 736h4v2h-4z" fill="#30a646" /><path d="M520 738h4v2h-4z" fill="#ca4b38" /><path d="M527 740h5v2h-5z" fill="#3d9ad4" />
          <path d="M508 746h31" stroke="#efd27c" strokeWidth="2" />
          <path d="M512 763v-8c0-3 2-3 4-3h15c3 0 4 1 4 3v8h-5v-5h-13v5z" fill="#8ccbea" stroke="#e3f5fd" />
          <path d="M515 744v12M509 750h12" stroke="#fff" strokeWidth=".9" />
          <circle cx="515" cy="750" r="1.500" fill="#fff" />
        </Ico>
      </TaskButton>
      <TaskButton className="ml-[3px] bg-[linear-gradient(135deg,#91bfdd,#62a4d2_45%,#428dc7)]">
        <Ico b={[556, 731, 57, 37]}>
          <Chrome x={585} y={748} />
          <circle cx="593" cy="756" r="8" fill="#7250b5" />
          <path d="m590.500 759.500 2-6h1l2 6M591.300 757.500h3.500" stroke="#e8ddf8" strokeWidth="1.200" />
        </Ico>
      </TaskButton>
      <svg width="350" height="38" viewBox="650 730 350 38" className="ml-[35px] block" fill="none">
        <path d="M650 730c100 5 230 16 290 38h60c-80-28-180-36-260-38z" fill="#65b5e8" opacity=".28" />
        <path d="M910 730c20 8 35 22 48 38" stroke="#8bcbea" opacity=".45" strokeWidth="2" />
      </svg>
      <Ico b={[1050, 730, 220, 38]} className="ml-auto">
        <path d="M1056 742h16v11h-3v3h-8v-3l-5-2z" fill="#111" />
        <path d="m1058 743 4 4 1-3 2 4 3-4 1 4 2-1v4l-6 1-7-3z" fill="#a8d2ee" />
        <path d="M1060 750h3v2h-3zM1067 751h3v2h-3z" fill="#5593c7" />
        <path d="M1080 741h16v16h-16z" fill="#f4403b" />
        <path d="m1083 749 3-3 3 3-3 3zM1093 749l-3-3-1.500 1.500 1.500 1.500-1.500 1.500 1.500 1.500z" fill="#fff" />
        <path d="M1105.500 743.500h8v12h-8zM1107 742h4" stroke="#fff" strokeWidth="1.600" />
        <path d="M1111 742v4M1115 742v4M1109.500 746h8v3l-2.500 2v5h-3v-5l-2.500-2z" fill="#fff" stroke="#fff" />
        <path d="M1129 746h3l4-4v14l-4-4h-3z" fill="#fff" />
        <path d="M1137.500 745.500c2 2 2 5 0 7M1140 743.500c3 3 3 8 0 11" stroke="#dce8f3" />
        <path d="M1153 752h2v2h-2zM1156 750h2v4h-2zM1159 748h2v6h-2zM1162 745h2v9h-2zM1165 742h2v12h-2z" fill="#fff" />
        <ellipse cx="1184" cy="748.500" rx="5.500" ry="7.500" fill="#174b8b" />
        <path d="m1181 745.500 6 6-3 3v-12l3 3-6 6" stroke="#fff" strokeWidth="1.300" />
        <path d="M1200 741h16v16h-16z" fill="#fff" />
        <path d="M1201 743h14M1201 746h14M1201 749h14M1201 752h14M1201 755h14" stroke="#4a4ad0" />
        <circle cx="1207.500" cy="747.500" r="4" fill="#fff" stroke="#111" strokeWidth="1.800" />
        <path d="m1210.500 751 4 4" stroke="#111" strokeWidth="2.200" />
        <path d="M1226 741v15" stroke="#fff" strokeWidth="1.500" />
        <path d="M1227 743h6v2l6 .500-2 3 1 2h-5v-1h-6z" fill="#fff" />
        <path d="M1248.500 741.500h15v15h-15z" fill="#e87822" stroke="#f4a661" />
        <path d="M1256 742.500c3 3-4 4 0 7M1252 750h8M1252 753h8c3 0 2-3 0-3M1251 755.500h10" stroke="#fff" strokeWidth="1.200" />
      </Ico>
      <div className="flex w-[81px] flex-col items-center pt-[2px] text-[12px] leading-[17px] text-white">
        <Fit className="w-[43px]">3:27 PM</Fit>
        <Fit className="w-[59px]">16/04/2023</Fit>
      </div>
      <div className="ml-px h-[38px] w-[14px] border border-[#7793ae] bg-[linear-gradient(135deg,#4f769d,#1d4270_50%,#153459)]" />
    </div>
  );
}

export default function App() {
  return (
    <div className="flex h-[768px] w-[1366px] flex-col overflow-hidden bg-white font-['Open_Sans','Noto_Sans',sans-serif] text-[12px] leading-4 text-[#444444]">
      <TitleBar />
      <RibbonTabs />
      <div className="flex h-[93px] shrink-0 border-b border-[#d4d4d4] bg-white">
        <Clipboard />
        <FontGroup />
        <Alignment />
        <NumberGroup />
        <Styles />
        <Cells />
        <Editing />
        <svg width="9" height="6" viewBox="0 0 9 6" className="mr-[10px] mb-[5px] ml-auto self-end" fill="none"><path d="m1 5 3.500-3.500L8 5" stroke="#666" strokeWidth="1.800" /></svg>
      </div>
      <FormulaBar />
      <div className="flex h-[489px] shrink-0">
        <div className="border-t border-[#ababab]"><Sheet /></div>
        <VScroll />
      </div>
      <SheetTabs />
      <StatusBar />
      <Taskbar />
    </div>
  );
}
